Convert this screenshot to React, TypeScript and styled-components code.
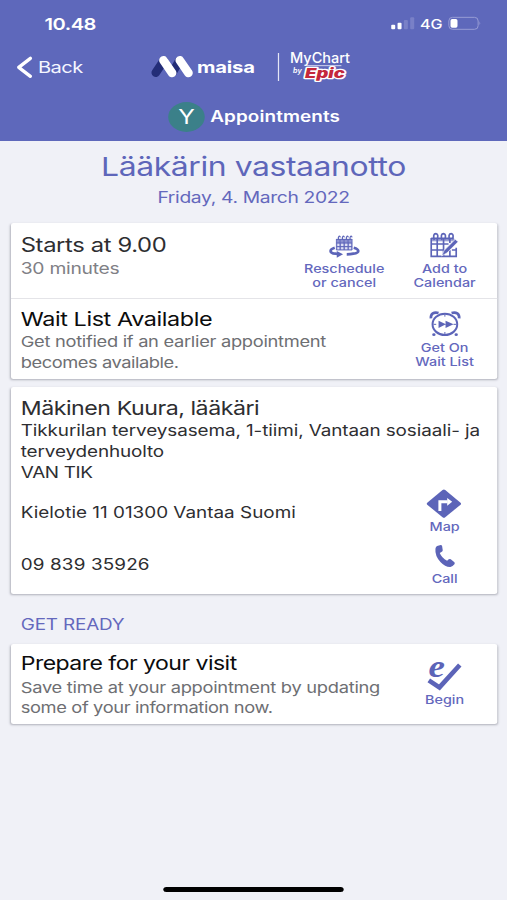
import React from "react";
import styled, { createGlobalStyle } from "styled-components";

const STRETCH = 1.21875;

const GlobalStyle = createGlobalStyle`
  *, *::before, *::after { box-sizing: border-box; }
  html, body { margin: 0; padding: 0; background: #f0f1f7; overflow: hidden; }
  body { width: 507px; height: 900px; font-family: "Inter", "Liberation Sans", sans-serif; }
  svg { display: block; flex: none; overflow: visible; }
`;

/* The phone canvas is 416 units wide and shown at a wider aspect ratio. */
const Screen = styled.div`
  width: 416px;
  height: 900px;
  display: flex;
  flex-direction: column;
  background: #f0f1f7;
  transform: scaleX(${STRETCH});
  transform-origin: 0 0;
`;

const Text = styled.div<{ $size: number; $line: number; $color?: string; $weight?: number; $track?: number }>`
  font-size: ${(p) => p.$size}px;
  line-height: ${(p) => p.$line}px;
  color: ${(p) => p.$color ?? "#2e2e31"};
  font-weight: ${(p) => p.$weight ?? 400};
  letter-spacing: ${(p) => p.$track ?? 0}px;
  white-space: nowrap;
`;

const Header = styled.header`
  height: 141px;
  flex: none;
  background: #5e68bb;
`;

const StatusBar = styled.div`
  height: 47px;
  padding: 0 21px 0 36.5px;
  display: flex;
  align-items: center;
  justify-content: space-between;
`;

const StatusIcons = styled.div`
  display: flex;
  align-items: center;
  gap: 5.3px;
`;

const NavBar = styled.nav`
  height: 40px;
  padding-left: 13.5px;
  display: flex;
  align-items: center;
`;

const BackButton = styled.div`
  width: 110.5px;
  display: flex;
  align-items: center;
  gap: 5px;
`;

const Brand = styled.div`
  width: 104px;
  flex: none;
  display: flex;
  align-items: center;
  gap: 3px;
`;

const Divider = styled.div`
  width: 1.3px;
  height: 28px;
  margin-right: 8.6px;
  background: #e4e6f6;
`;

const PatientBar = styled.div`
  height: 58px;
  padding: 1px 0 0 138px;
  display: flex;
  align-items: center;
  gap: 4.5px;
`;

const Avatar = styled.div`
  width: 30px;
  height: 30px;
  border-radius: 50%;
  background: #3b8089;
  display: flex;
  align-items: center;
  justify-content: center;
`;

const Heading = styled.section`
  height: 82px;
  flex: none;
  padding-top: 9px;
  display: flex;
  flex-direction: column;
  align-items: center;
`;

const Card = styled.section<{ $height: number; $gap?: number }>`
  height: ${(p) => p.$height}px;
  margin: 0 8px ${(p) => p.$gap ?? 0}px 9px;
  flex: none;
  background: #fff;
  border-radius: 2px;
  box-shadow: 0 1px 2px rgba(40, 42, 60, 0.32);
`;

const Row = styled.div<{ $height: number; $ruled?: boolean }>`
  height: ${(p) => p.$height}px;
  padding: 0 2px 0 8px;
  display: flex;
  justify-content: space-between;
  border-top: ${(p) => (p.$ruled ? "1px solid #e4e4e8" : "0")};
`;

const Copy = styled.div<{ $top: number }>`
  min-width: 0;
  padding-top: ${(p) => p.$top}px;
`;

const Actions = styled.div`
  display: flex;
`;

const ActionBox = styled.div<{ $top: number }>`
  width: 82.4px;
  flex: none;
  padding-top: ${(p) => p.$top}px;
  display: flex;
  flex-direction: column;
  align-items: center;
  text-align: center;
`;

const IconSlot = styled.div<{ $height: number }>`
  height: ${(p) => p.$height}px;
`;

const SectionTitle = styled.div`
  height: 50px;
  padding: 20px 0 0 17px;
  flex: none;
`;

const Footer = styled.footer`
  margin-top: auto;
  height: 13.5px;
  display: flex;
  justify-content: center;
`;

const HomeIndicator = styled.div`
  width: 148.5px;
  height: 5px;
  border-radius: 3px;
  background: #000;
`;

const ACCENT = "#6468bd";
const INK = "#5c64b8";
const MUTED = "#6e6f73";

type ArtProps = { box: [number, number, number, number]; children: React.ReactNode };

/* Drawing whose units are a third of a displayed pixel. */
const Art = ({ box, children }: ArtProps) => (
  <svg
    width={box[2] / 3 / STRETCH}
    height={box[3] / 3}
    viewBox={box.join(" ")}
    preserveAspectRatio="none"
    fill="none"
  >
    {children}
  </svg>
);

const Signal = () => (
  <Art box={[414, 52, 68, 37]}>
    <rect x="414" y="75" width="12" height="14" rx="3" fill="#fff" />
    <rect x="433" y="69" width="12" height="20" rx="3" fill="#fff" />
    <rect x="452" y="61" width="12" height="28" rx="3" fill="#7980c7" />
    <rect x="471" y="53" width="12" height="36" rx="3" fill="#7980c7" />
  </Art>
);

const Battery = () => (
  <Art box={[586, 52, 97, 38]}>
    <rect x="587" y="53" width="88" height="36" rx="11" stroke="#989dd5" strokeWidth="3" />
    <rect x="592" y="58" width="21" height="26" rx="5" fill="#fff" />
    <path d="M679 65q5 6 0 12z" fill="#989dd5" />
  </Art>
);

const Chevron = () => (
  <Art box={[50, 168, 46, 68]}>
    <path d="M90 175L55 202L90 229" stroke="#fff" strokeWidth="10" strokeLinecap="round" strokeLinejoin="round" />
  </Art>
);

const MaisaMark = () => (
  <Art box={[453, 168, 127, 64]}>
    <g strokeWidth="26" strokeLinecap="round">
      <path d="M467 218L491 182M517 218L538 182" stroke="#232d78" />
      <path d="M490 181L516 219M539 181L565 219" stroke="#fff" />
    </g>
  </Art>
);

const MyChartLogo = () => (
  <Art box={[110, 156, 182, 90]}>
    <text x="110" y="190" textLength="180" lengthAdjust="spacingAndGlyphs" fontFamily="Inter, sans-serif" fontSize="43" fontWeight="500" fill="#fff">MyChart</text>
    <path d="M158 197H264" stroke="#e9ebfa" strokeWidth="2.5" />
    <text x="119" y="220" textLength="26" lengthAdjust="spacingAndGlyphs" fontFamily="Inter, sans-serif" fontSize="21" fontStyle="italic" fontWeight="600" fill="#fff">by</text>
    <text x="155" y="234" textLength="119" lengthAdjust="spacingAndGlyphs" fontFamily="Inter, sans-serif" fontSize="40" fontStyle="italic" fontWeight="900" fill="#c4283c" stroke="#fff" strokeWidth="8" strokeLinejoin="round" paintOrder="stroke">Epic</text>
  </Art>
);

const Reschedule = () => (
  <Art box={[228, 285, 92, 68]}>
    <rect x="250" y="297" width="47" height="33" fill="#8c91d0" />
    <path d="M250 297V330M261 297V330M273 297V330M285 297V330M297 297V330M250 298H297M250 309H297M250 320H297M250 330H297" stroke={INK} strokeWidth="2.6" />
    <path d="M253 318h6v-7h-6zM264 318h7v-7h-7zM276 318h7v-7h-7zM288 318h6v-7h-6zM253 328h6v-6h-6zM264 328h7v-6h-7zM276 328h7v-6h-7zM288 328h6v-6h-6z" fill="#dfe1f4" />
    <path d="M256 300v-8q4-7 6 0M268 300v-8q4-7 6 0M280 300v-8q4-7 6 0M291 300v-8q4-7 6 0" stroke={INK} strokeWidth="3.5" />
    <path d="M245 323C228 328 228 339 247 341L255 342" stroke={INK} strokeWidth="8" />
    <path d="M251 333L270 343L251 353z" fill={INK} />
    <path d="M302 323C320 328 321 338 301 341Q292 343 281 343" stroke={INK} strokeWidth="8" />
  </Art>
);

const AddCalendar = () => (
  <Art box={[533, 278, 86, 73]}>
    <path d="M536 293V348H611V322M536 294H603M536 311H588M536 329H574M554 294V348M573 294V348M592 294V308M592 330V348M598 329H611" stroke={INK} strokeWidth="5" />
    <path d="M536 295H606V303H536z" fill={INK} opacity=".6" />
    <path d="M545 299Q540 280 550 280Q559 281 554 297M568 299Q563 280 573 280Q582 281 577 297M591 299Q586 280 596 280Q605 281 600 297" stroke={INK} strokeWidth="5" />
    <path d="M567 347L575 330L608 297L617 304L583 338z" fill={INK} stroke="#fff" strokeWidth="2" />
  </Art>
);

const AlarmClock = () => (
  <Art box={[530, 62, 90, 76]}>
    <ellipse cx="574" cy="102" rx="37" ry="32" stroke={INK} strokeWidth="6" />
    <path d="M574 72v7M574 125v7M540 102h8M600 102h8" stroke={INK} strokeWidth="3" />
    <path d="M532 84C531 70 541 64 555 68M617 84C618 70 608 64 594 68" stroke={INK} strokeWidth="8" />
    <path d="M555 91L577 102L555 113zM576 91L600 102L576 113z" fill={INK} />
    <ellipse cx="541" cy="133" rx="5" ry="4" fill={INK} />
    <ellipse cx="608" cy="133" rx="5" ry="4" fill={INK} />
  </Art>
);

const MapSign = () => (
  <Art box={[141, 57, 105, 88]}>
    <path d="M189 60Q193 57 197 60L243 98Q246 101 243 104L197 142Q193 145 189 142L143 104Q140 101 143 98z" fill={INK} />
    <path d="M181 123V95H204" stroke="#fff" strokeWidth="9" />
    <path d="M203 84L218 95L203 107z" fill="#fff" />
  </Art>
);

const Phone = () => (
  <Art box={[164, 224, 60, 67]}>
    <path d="M170 227L181 224Q184 224 185 227L187 240Q187 243 183 245L178 248Q184 263 200 271L205 267Q208 265 211 267L222 276Q224 279 222 282Q217 289 210 290Q195 291 180 275Q163 256 165 235Q166 229 170 227z" fill={INK} />
  </Art>
);

const ECheck = () => (
  <Art box={[143, 66, 100, 84]}>
    <g transform="translate(145 112) scale(1.18 1)">
      <text fontFamily="Liberation Serif, serif" fontSize="94" fontStyle="italic" fontWeight="700" fill={INK}>e</text>
    </g>
    <path d="M146 121L178 142L239 75" stroke={INK} strokeWidth="14" />
  </Art>
);

type ActionProps = { top: number; slot: number; lines: string[]; children: React.ReactNode };

const Action = ({ top, slot, lines, children }: ActionProps) => (
  <ActionBox $top={top}>
    <IconSlot $height={slot}>{children}</IconSlot>
    {lines.map((line) => (
      <Text key={line} $size={11.8} $line={14.1} $color={ACCENT} $weight={450}>{line}</Text>
    ))}
  </ActionBox>
);

export default function App() {
  return (
    <>
      <GlobalStyle />
      <Screen>
        <Header>
          <StatusBar>
            <Text $size={16.5} $line={20} $weight={600} $color="#fff" $track={-0.4}>10.48</Text>
            <StatusIcons>
              <Signal />
              <Text $size={13.2} $line={18} $weight={500} $color="#fff">4G</Text>
              <Battery />
            </StatusIcons>
          </StatusBar>
          <NavBar>
            <BackButton>
              <Chevron />
              <Text $size={16.5} $line={22} $color="#f5f6ff" $track={-0.4}>Back</Text>
            </BackButton>
            <Brand>
              <MaisaMark />
              <Text $size={16.6} $line={22} $weight={650} $color="#fff" $track={-0.2}>maisa</Text>
            </Brand>
            <Divider />
            <MyChartLogo />
          </NavBar>
          <PatientBar>
            <Avatar><Text $size={20} $line={30} $color="#fff">Y</Text></Avatar>
            <Text $size={15.5} $line={20} $weight={600} $color="#fff" $track={0.08}>Appointments</Text>
          </PatientBar>
        </Header>
        <Heading>
          <Text $size={26.2} $line={34} $color="#5e66ba" $track={-0.35}>Lääkärin vastaanotto</Text>
          <Text $size={15.8} $line={28} $color={ACCENT} $track={-0.28}>Friday, 4. March 2022</Text>
        </Heading>
        <Card $height={155.5} $gap={8.5}>
          <Row $height={74.5}>
            <Copy $top={9}>
              <Text $size={19.5} $line={26} $track={-0.3}>Starts at 9.00</Text>
              <Text $size={15.8} $line={22} $color="#808085" $track={-0.2}>30 minutes</Text>
            </Copy>
            <Actions>
              <Action top={12} slot={26.7} lines={["Reschedule", "or cancel"]}><Reschedule /></Action>
              <Action top={9.5} slot={29.2} lines={["Add to", "Calendar"]}><AddCalendar /></Action>
            </Actions>
          </Row>
          <Row $height={81} $ruled>
            <Copy $top={7.5}>
              <Text $size={19.2} $line={26} $color="#0c0c0d" $track={-0.33}>Wait List Available</Text>
              <Text $size={15} $line={20.5} $color={MUTED} $track={-0.24}>Get notified if an earlier appointment</Text>
              <Text $size={15} $line={20.5} $color={MUTED} $track={-0.36}>becomes available.</Text>
            </Copy>
            <Action top={12.5} slot={30} lines={["Get On", "Wait List"]}><AlarmClock /></Action>
          </Row>
        </Card>
        <Card $height={207}>
          <Row $height={102}>
            <Copy $top={9}>
              <Text $size={19} $line={25} $track={-0.38}>Mäkinen Kuura, lääkäri</Text>
              <Text $size={15.5} $line={20.8} $track={-0.08}>Tikkurilan terveysasema, 1-tiimi, Vantaan sosiaali- ja</Text>
              <Text $size={15.5} $line={20.8} $track={-0.1}>terveydenhuolto</Text>
              <Text $size={15.5} $line={20} $track={-0.27}>VAN TIK</Text>
            </Copy>
          </Row>
          <Row $height={55}>
            <Copy $top={13.6}><Text $size={15.5} $line={20}>Kielotie 11 01300 Vantaa Suomi</Text></Copy>
            <Action top={0} slot={31} lines={["Map"]}><MapSign /></Action>
          </Row>
          <Row $height={50}>
            <Copy $top={11}><Text $size={15.5} $line={20} $track={0.1}>09 839 35926</Text></Copy>
            <Action top={0.7} slot={27.8} lines={["Call"]}><Phone /></Action>
          </Row>
        </Card>
        <SectionTitle><Text $size={15.5} $line={21} $color={ACCENT} $track={-0.14}>GET READY</Text></SectionTitle>
        <Card $height={79.5}>
          <Row $height={79.5}>
            <Copy $top={7}>
              <Text $size={18.9} $line={26.6} $color="#0c0c0d" $track={-0.43}>Prepare for your visit</Text>
              <Text $size={15} $line={20.3} $color={MUTED} $track={-0.22}>Save time at your appointment by updating</Text>
              <Text $size={15} $line={20.3} $color={MUTED} $track={-0.3}>some of your information now.</Text>
            </Copy>
            <Action top={18} slot={30.5} lines={["Begin"]}><ECheck /></Action>
          </Row>
        </Card>
        <Footer><HomeIndicator /></Footer>
      </Screen>
    </>
  );
}
